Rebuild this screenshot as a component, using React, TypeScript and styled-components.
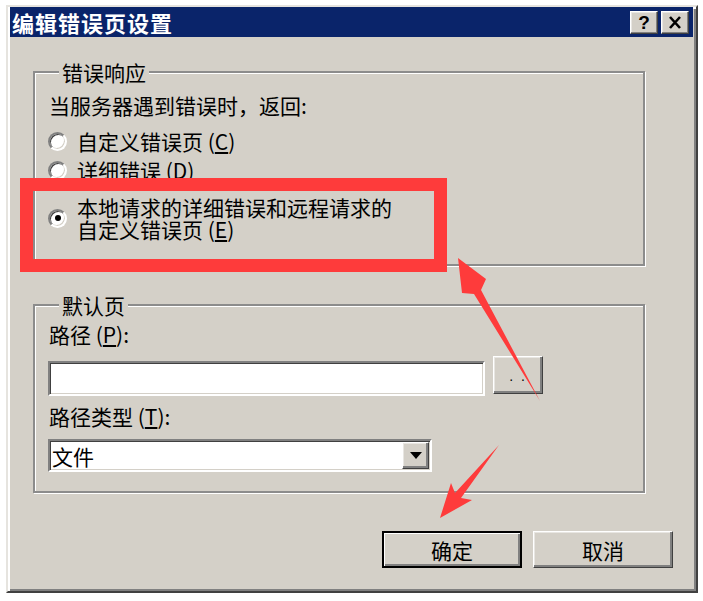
import React from "react";
import styled, { createGlobalStyle } from "styled-components";

const Global = createGlobalStyle`
  html, body { margin: 0; padding: 0; background: #ffffff; }
  body { font-family: "Noto Sans CJK SC", "Noto Sans", sans-serif; color: #000; }
  * { box-sizing: border-box; }
`;

const FONT = `"Noto Sans CJK SC", "Noto Sans", sans-serif`;

const Stage = styled.div`
  position: relative;
  width: 703px;
  height: 601px;
  padding: 5px 0 0 6px;
  overflow: hidden;
`;

const Window = styled.div`
  width: 692px;
  height: 588px;
  background: #d4d0c8;
  border: 2px solid;
  border-color: #e6e4df #404040 #404040 #e6e4df;
  box-shadow: inset 2px 2px #ffffff, inset -2px -2px #808080;
  padding: 0 3px 0 2px;
  display: flex;
  flex-direction: column;
`;

const TitleBar = styled.div`
  height: 30px;
  background: #0a246a;
  display: flex;
  align-items: center;
  justify-content: space-between;
  padding: 0 4px 0 2px;
  flex-shrink: 0;
`;

const TitleText = styled.div`
  color: #ffffff;
  font-family: ${FONT};
  font-weight: 700;
  font-size: 22px;
  letter-spacing: 1px;
  line-height: 30px;
`;

const CaptionButtons = styled.div`
  display: flex;
  gap: 3px;
`;

const CaptionButton = styled.div`
  width: 28px;
  height: 23px;
  background: #d4d0c8;
  border: 1px solid;
  border-color: #ffffff #404040 #404040 #ffffff;
  box-shadow: inset -1px -1px #808080, inset 1px 1px #e8e6e2;
  display: flex;
  align-items: center;
  justify-content: center;
  font-family: "Liberation Sans", sans-serif;
  font-weight: 700;
  font-size: 19px;
  line-height: 1;
  color: #000;
`;

const Body = styled.div`
  flex: 1;
  display: flex;
  flex-direction: column;
  padding: 24px 20px 0 23px;
`;

const Group = styled.fieldset<{ $mt?: number }>`
  margin: ${(p) => p.$mt ?? 0}px 28px 0 0;
  padding: 0 13px 0 13px;
  border: 2px solid #8c8c8c;
  box-shadow: inset 1px 1px #ffffff, 1px 1px #ffffff;
  min-width: 0;
  display: flex;
  flex-direction: column;
`;

const Legend = styled.legend`
  margin-left: 11px;
  padding: 0 3px;
  font-family: ${FONT};
  font-size: 21px;
  line-height: 22px;
  background: #d4d0c8;
  position: relative;
  z-index: 1;
`;

const Label = styled.div<{ $mt: number }>`
  margin-top: ${(p) => p.$mt}px;
  padding-left: 1px;
  font-family: ${FONT};
  font-size: 21px;
  line-height: 22px;
  white-space: nowrap;
`;

const Option = styled.div<{ $mt: number }>`
  margin-top: ${(p) => p.$mt}px;
  display: flex;
  align-items: center;
  gap: 10px;
`;

const Radio = styled.span<{ $checked?: boolean }>`
  position: relative;
  flex-shrink: 0;
  width: 19px;
  height: 19px;
  border-radius: 50%;
  background: #ffffff;
  border: 2px solid;
  border-color: #808080 #ffffff #ffffff #808080;
  box-shadow: inset 1px 1px #404040, inset -1px -1px #d4d0c8;
  &::after {
    content: "";
    display: ${(p) => (p.$checked ? "block" : "none")};
    position: absolute;
    left: 50%;
    top: 50%;
    width: 6px;
    height: 6px;
    margin: -3px 0 0 -3px;
    border-radius: 50%;
    background: #000;
  }
`;

const OptionText = styled.div`
  font-family: ${FONT};
  font-size: 21px;
  line-height: 22px;
`;

const Bottom = styled.div<{ $h: number }>`
  height: ${(p) => p.$h}px;
`;

const PathRow = styled.div`
  margin-top: 11px;
  display: flex;
  align-items: flex-start;
  gap: 8px;
`;

const Sunken = styled.div<{ $w: number; $h: number }>`
  width: ${(p) => p.$w}px;
  height: ${(p) => p.$h}px;
  background: #ffffff;
  border: 2px solid;
  border-color: #808080 #ffffff #ffffff #808080;
  box-shadow: inset 1px 1px #404040, inset -1px -1px #d4d0c8;
`;

const PathInput = styled(Sunken)`
  margin-top: 5px;
`;

const Raised = styled.div`
  background: #d4d0c8;
  border: 1px solid;
  border-color: #ffffff #404040 #404040 #ffffff;
  box-shadow: inset -2px -2px #808080, inset 1px 1px #e8e6e2;
  display: flex;
  align-items: center;
  justify-content: center;
`;

const BrowseButton = styled(Raised)`
  width: 50px;
  height: 38px;
  font-family: "Liberation Sans", sans-serif;
  font-size: 14px;
  letter-spacing: 2px;
  padding-top: 2px;
`;

const Select = styled(Sunken)`
  margin-top: 12px;
  display: flex;
  align-items: center;
  justify-content: space-between;
  padding: 0 1px 0 2px;
`;

const SelectText = styled.span`
  font-family: ${FONT};
  font-size: 21px;
  line-height: 22px;
`;

const DropButton = styled(Raised)`
  width: 27px;
  height: 27px;
`;

const ButtonRow = styled.div`
  margin-top: 38px;
  display: flex;
  justify-content: flex-end;
  gap: 11px;
`;

const DialogButton = styled(Raised)<{ $default?: boolean }>`
  width: 140px;
  height: 37px;
  font-family: ${FONT};
  font-size: 21px;
  line-height: 22px;
  ${(p) =>
    p.$default
      ? `border: 2px solid #000; box-shadow: inset 1px 1px #ffffff, inset -2px -2px #808080;`
      : ``}
`;

const RedBox = styled.div`
  position: absolute;
  left: 20px;
  top: 178px;
  width: 427px;
  height: 94px;
  border: 13px solid #fe3b3b;
  pointer-events: none;
`;

const Overlay = styled.svg`
  position: absolute;
  left: 0;
  top: 0;
  pointer-events: none;
`;

export default function App() {
  return (
    <>
      <Global />
      <Stage>
        <Window>
          <TitleBar>
            <TitleText>编辑错误页设置</TitleText>
            <CaptionButtons>
              <CaptionButton>?</CaptionButton>
              <CaptionButton>
                <svg width="14" height="13" viewBox="0 0 14 13">
                  <path d="M2 1 L12 12 M12 1 L2 12" stroke="#000" strokeWidth="2.6" />
                </svg>
              </CaptionButton>
            </CaptionButtons>
          </TitleBar>
          <Body>
            <Group>
              <Legend>错误响应</Legend>
              <Label $mt={11}>当服务器遇到错误时，返回:</Label>
              <Option $mt={14}>
                <Radio />
                <OptionText>
                  自定义错误页 (<u>C</u>)
                </OptionText>
              </Option>
              <Option $mt={7}>
                <Radio />
                <OptionText>
                  详细错误 (<u>D</u>)
                </OptionText>
              </Option>
              <Option $mt={15}>
                <Radio $checked />
                <OptionText>
                  本地请求的详细错误和远程请求的
                  <br />
                  自定义错误页 (<u>E</u>)
                </OptionText>
              </Option>
              <Bottom $h={24} />
            </Group>
            <Group $mt={28}>
              <Legend>默认页</Legend>
              <Label $mt={7}>
                路径 (<u>P</u>):
              </Label>
              <PathRow>
                <PathInput $w={437} $h={35} />
                <BrowseButton>. .</BrowseButton>
              </PathRow>
              <Label $mt={9}>
                路径类型 (<u>T</u>):
              </Label>
              <Select $w={384} $h={33}>
                <SelectText>文件</SelectText>
                <DropButton>
                  <svg width="12" height="7" viewBox="0 0 12 7">
                    <path d="M0 0 H12 L6 7 Z" fill="#000" />
                  </svg>
                </DropButton>
              </Select>
              <Bottom $h={19} />
            </Group>
            <ButtonRow>
              <DialogButton $default>确定</DialogButton>
              <DialogButton>取消</DialogButton>
            </ButtonRow>
          </Body>
        </Window>
        <RedBox />
        <Overlay width="703" height="601" viewBox="0 0 703 601">
          <path
            d="M458 258 L486 279 L481 290 L540 401 L474 294 L462 293 Z"
            fill="#fe3b3b"
          />
          <path
            d="M499 445 L461 498 L472 500 L440 518 L451 483 L455 493 Z"
            fill="#fe3b3b"
          />
        </Overlay>
      </Stage>
    </>
  );
}
